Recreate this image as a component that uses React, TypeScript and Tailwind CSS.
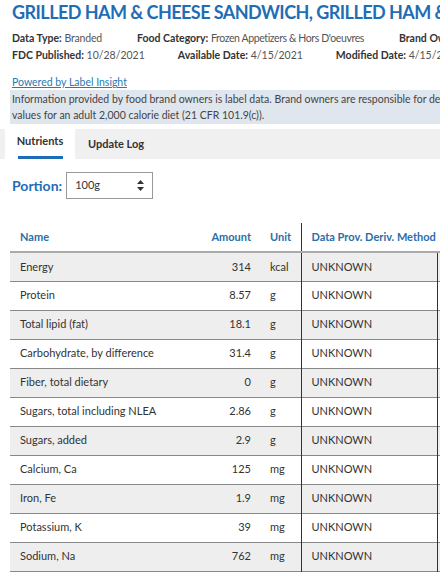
import React from 'react';

const rows: [string, string, string][] = [
  ['Energy', '314', 'kcal'],
  ['Protein', '8.57', 'g'],
  ['Total lipid (fat)', '18.1', 'g'],
  ['Carbohydrate, by difference', '31.4', 'g'],
  ['Fiber, total dietary', '0', 'g'],
  ['Sugars, total including NLEA', '2.86', 'g'],
  ['Sugars, added', '2.9', 'g'],
  ['Calcium, Ca', '125', 'mg'],
  ['Iron, Fe', '1.9', 'mg'],
  ['Potassium, K', '39', 'mg'],
  ['Sodium, Na', '762', 'mg'],
];

export default function App() {
  return (
    <div className="w-[440px] h-[582px] overflow-hidden bg-white font-['Lato','Liberation_Sans',sans-serif] text-[#333]">
      <div className="w-[440px]">
        <h1 className="pl-3 pt-[1px] text-[18px] leading-[22px] font-bold tracking-[-0.55px] text-[#1f6db5] whitespace-nowrap overflow-hidden">
          GRILLED HAM &amp; CHEESE SANDWICH, GRILLED HAM &amp; CHEESE
        </h1>

        <div className="mt-[7px] pl-3 text-[10.5px] leading-[17px] whitespace-nowrap overflow-hidden">
          <div className="flex gap-[35px]">
            <span><b>Data Type:</b> <span className="text-[#555] tracking-[-0.2px]">Branded</span></span>
            <span><b>Food Category:</b> <span className="text-[#555] tracking-[-0.4px]">Frozen Appetizers &amp; Hors D'oeuvres</span></span>
            <span><b>Brand Owner:</b> <span className="text-[#555]">Nestle USA Inc.</span></span>
          </div>
          <div className="flex gap-[33px]">
            <span><b>FDC Published:</b> <span className="text-[#555]">10/28/2021</span></span>
            <span><b>Available Date:</b> <span className="text-[#555]">4/15/2021</span></span>
            <span><b>Modified Date:</b> <span className="text-[#555]">4/15/2021</span></span>
          </div>
        </div>

        <div className="mt-[11px] pl-3 text-[10.5px] leading-[14px]">
          <a className="text-[#2a7ab0] underline">Powered by Label Insight</a>
        </div>
        <div className="ml-[10px] mt-[1px] bg-[#dfe6ee] px-[2px] py-[1px] text-[10.5px] leading-[16px] text-[#444] whitespace-nowrap overflow-hidden">
          <p>Information provided by food brand owners is label data. Brand owners are responsible for descriptions, nutrient data and ingredient information.</p>
          <p>values for an adult 2,000 calorie diet (21 CFR 101.9(c)).</p>
        </div>

        <div className="mt-[5px] flex h-[30px] bg-[#f0f0f0] text-[11px] font-bold">
          <div className="ml-[5px] flex w-[70px] flex-col items-center justify-center bg-white">
            <span className="mt-[4px]">Nutrients</span>
            <span className="mt-[6px] h-[3px] w-[45px] bg-[#1f6db5]" />
          </div>
          <div className="flex items-center pl-[13px]">Update Log</div>
        </div>

        <div className="mt-[13px] flex items-center pl-3">
          <span className="text-[14px] font-bold text-[#1f6db5]">Portion:</span>
          <div className="ml-[4px] flex h-[27px] w-[87px] items-center justify-between border border-[#999] pl-2 pr-[8px] text-[11px]">
            <span>100g</span>
            <svg width="7" height="11" viewBox="0 0 7 11">
              <path d="M3.5 0 L7 4 L0 4 Z M0 7 L7 7 L3.5 11 Z" fill="#333" />
            </svg>
          </div>
        </div>

        <div className="ml-[10px] mt-[24px] w-[430px] overflow-hidden">
          <table className="w-[626px] table-fixed border-collapse text-[11px] whitespace-nowrap">
            <thead>
              <tr className="h-[29px] border-b-2 border-[#aaa] text-[#2a6ea8] font-bold">
                <th className="w-[190px] pl-[10px] text-left">Name</th>
                <th className="w-[51px] text-right">Amount</th>
                <th className="w-[50px] pl-[19px] text-left">Unit</th>
                <th className="w-[136px] border-l border-[#333] pl-[10px] text-left">Data Prov. Deriv. Method</th>
                <th className="w-[199px] text-left"></th>
              </tr>
            </thead>
            <tbody>
              {rows.map(([name, amount, unit], i) => (
                <tr key={name} className={`h-[29px] border-b border-[#888] ${i % 2 === 0 ? 'bg-[#eeeeee]' : 'bg-white'}`}>
                  <td className="pl-[10px]">{name}</td>
                  <td className="text-right">{amount}</td>
                  <td className="pl-[19px]">{unit}</td>
                  <td className="border-l border-[#333] pl-[10px]">UNKNOWN</td>
                  <td className="border-l border-[#333]"></td>
                </tr>
              ))}
            </tbody>
          </table>
        </div>
      </div>
    </div>
  );
}
